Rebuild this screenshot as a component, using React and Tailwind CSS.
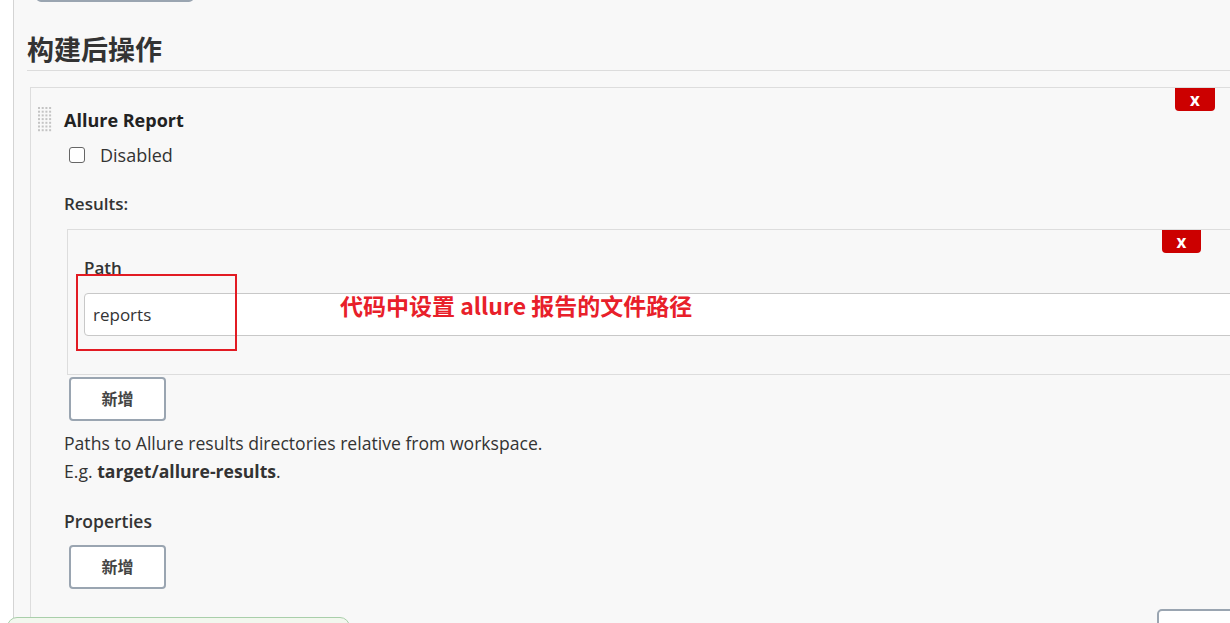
import React from "react";

const font = { fontFamily: '"Open Sans", "Noto Sans CJK SC", sans-serif' };

function AddButton() {
  return (
    <button className="ml-[38px] w-[97px] h-[44px] border-2 border-[#9aa5b1] rounded-[4px] bg-white text-[16px] font-bold text-[#444] flex items-center justify-center">
      新增
    </button>
  );
}

function CloseX({ className }) {
  return (
    <div className={"absolute bg-[#cc0000] rounded-b-[4px] text-white font-bold text-[17px] leading-none flex items-center justify-center " + className}>
      x
    </div>
  );
}

function Handle() {
  const dots = [];
  for (let r = 0; r < 7; r++) {
    for (let c = 0; c < 4; c++) {
      dots.push(<rect key={r + "-" + c} x={c * 3.7} y={r * 3.7} width="2" height="2" fill="#c4c4c4" />);
    }
  }
  return (
    <svg width="14" height="26" viewBox="0 0 14 26" className="shrink-0">
      {dots}
    </svg>
  );
}

export default function App() {
  return (
    <div className="relative w-[1230px] h-[623px] overflow-hidden flex bg-white text-[#333]" style={font}>
      <div className="w-[14px] h-full bg-white border-r border-[#d4d4d4] shrink-0" />
      <div className="flex-1 bg-[#f8f8f8] flex flex-col min-w-0">
        <div className="ml-[22px] -mt-[39px] w-[158px] h-[41px] border-2 border-[#9aa5b1] rounded-[5px] bg-white shrink-0" />
        <div className="ml-[13px] mt-[28px] border-b border-[#dcdcdc] h-[41px] flex items-start">
          <h2 className="text-[27px] font-bold leading-[38px] text-[#333]" style={{ fontFamily: '"Noto Sans CJK SC", sans-serif' }}>构建后操作</h2>
        </div>
        <div className="ml-[16px] -mr-[20px] mt-[16px] flex-1 border border-r-0 border-b-0 border-[#dddddd] flex flex-col">
          <div className="mt-[19px] ml-[7px] flex items-center h-[26px]">
            <Handle />
            <span className="ml-[12px] text-[18px] font-bold leading-[26px] text-[#222]">Allure Report</span>
          </div>
          <div className="mt-[10px] ml-[38px] flex items-center h-[24px]">
            <span className="w-[16px] h-[16px] border border-[#666] rounded-[3px] bg-white shrink-0" />
            <span className="ml-[15px] text-[18px] leading-[24px]">Disabled</span>
          </div>
          <div className="mt-[25px] ml-[33px] h-[24px] text-[17px] leading-[24px] text-[#333] font-semibold">Results:</div>
          <div className="mt-[13px] ml-[36px] border border-r-0 border-[#dddddd] pl-[16px] pt-[26px] pb-[38px] flex flex-col">
            <div className="h-[24px] text-[17px] leading-[24px] font-semibold">Path</div>
            <div className="mt-[13px] h-[43px] border border-[#c8c8c8] rounded-l-[4px] bg-white flex items-center pl-[8px] text-[17px] text-[#333]">
              reports
            </div>
          </div>
          <div className="mt-[2px]">
            <AddButton />
          </div>
          <div className="mt-[8px] ml-[33px] text-[17.6px] leading-[28px] text-[#333]">
            <div>Paths to Allure results directories relative from workspace.</div>
            <div>E.g. <span className="font-bold">target/allure-results</span>.</div>
          </div>
          <div className="mt-[24px] ml-[33px] h-[24px] text-[17.5px] leading-[24px] font-semibold">Properties</div>
          <div className="mt-[12px]">
            <AddButton />
          </div>
        </div>
      </div>

      <CloseX className="left-[1175px] top-[88px] w-[40px] h-[23px]" />
      <CloseX className="left-[1162px] top-[230px] w-[39px] h-[23px]" />

      <div className="absolute left-[76px] top-[274px] w-[161px] h-[77px] border-2 border-[#e21b23]" />
      <div
        className="absolute left-[340px] top-[289px] text-[23px] font-bold leading-[32px] text-[#e8202a]"
        style={{ fontFamily: '"Noto Sans CJK SC", sans-serif' }}
      >
        代码中设置 allure 报告的文件路径
      </div>

      <div className="absolute left-[7px] top-[617px] w-[343px] h-[20px] border border-[#a9cfaa] rounded-t-[10px] bg-[#f2f7ee]" />
      <div className="absolute left-[1157px] top-[609px] w-[90px] h-[30px] border-2 border-[#9aa5b1] rounded-[5px] bg-white" />
    </div>
  );
}
